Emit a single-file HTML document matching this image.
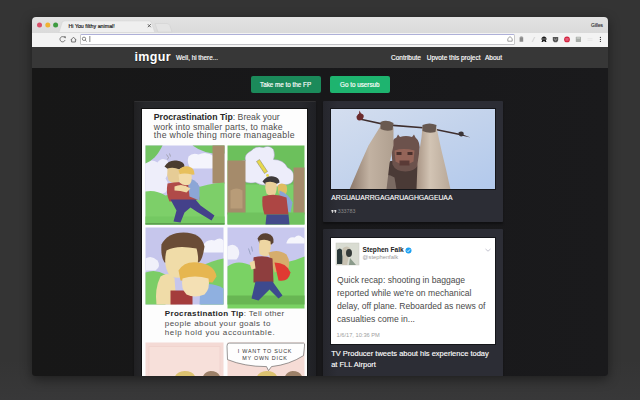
<!DOCTYPE html>
<html><head><meta charset="utf-8">
<style>
*{margin:0;padding:0;box-sizing:border-box}
html,body{width:640px;height:400px;overflow:hidden}
body{background:linear-gradient(#343434 0%,#343434 90%,#383839 100%);font-family:"Liberation Sans",sans-serif;position:relative}
.a{position:absolute;white-space:nowrap}
#win{left:32px;top:17px;width:576.4px;height:359px;background:linear-gradient(90deg,#171717,#18181a 50%,#1a1a1c);border-radius:4px 4px 3px 3px;overflow:hidden;box-shadow:0 3px 12px rgba(0,0,0,.45)}
#in{left:-32px;top:-17px;width:640px;height:400px}
.dot{width:6px;height:6px;border-radius:50%;top:22px}
.btn{height:17px;border-radius:2px}
.card{background:linear-gradient(90deg,#25262c,#2c2d35 8%,#2c2d35);border-radius:1px;box-shadow:0 2px 2px rgba(0,0,0,.35)}
.t{line-height:1}
</style></head><body>
<div id="win" class="a"><div id="in" class="a">
  <!-- tab strip -->
  <div class="a" style="left:32px;top:17px;width:576px;height:16px;background:linear-gradient(#e2e2e2,#dadada)"></div>
  <svg class="a" style="left:32px;top:17px" width="576" height="31" viewBox="32 17 576 31">
   <circle cx="39.5" cy="25" r="2.5" fill="#d9506a"/>
   <circle cx="47.8" cy="25" r="2.5" fill="#f0b232"/>
   <circle cx="55.6" cy="25" r="2.5" fill="#3d9b40"/>
   <path d="M155 23.5 h12 q2 0 2.8 2 l2.2 6.5 h-14 z" fill="#e4e4e4" stroke="#cacaca" stroke-width="0.4"/>
   <path d="M59 32.5 l3.2 -10 q0.5 -1.5 2 -1.5 h85 q1.6 0 2.1 1.5 l3.5 10z" fill="#efefef" stroke="#cfcfcf" stroke-width="0.4"/>
   <path d="M147.8 24.2 l3 3 M150.8 24.2 l-3 3" stroke="#444" stroke-width="0.8"/>
  </svg>
  <div id="tabt" class="a t" style="-webkit-text-stroke:0.15px #111;left:68.5px;top:23.8px;font-size:5.3px;color:#111">Hi You filthy animal!</div>
  <div id="gil" class="a t" style="-webkit-text-stroke:0.1px #222;left:591px;top:23.8px;font-size:4.8px;color:#222">Gilles</div>
  <!-- toolbar -->
  <div class="a" style="left:32px;top:32.5px;width:576px;height:14.5px;background:#f3f3f3"></div>
  <div class="a" style="left:32px;top:46.6px;width:577px;height:0.9px;background:#1e1e1e"></div>
  <div class="a" style="left:79.5px;top:34px;width:435px;height:10.5px;background:#fff;border:1px solid #aeb0d8;border-left-color:#c4c4c4;border-bottom-color:#c2c2c6;border-right-color:#c8c8c8;border-radius:1.5px"></div>
  <svg class="a" style="left:32px;top:32px" width="576" height="16" viewBox="32 32 576 16">
   <!-- reload -->
   <path d="M64.6 37.6 a2.6 2.6 0 1 0 0.4 2.6" stroke="#555" stroke-width="0.8" fill="none"/>
   <path d="M63.6 36.2 l2.2 0.2 l-0.2 2.2z" fill="#555"/>
   <!-- home -->
   <path d="M70.6 40.2 L73.5 37.2 L76.4 40.2 M71.6 39.4 V42 H75.4 V39.4" stroke="#555" stroke-width="0.8" fill="none"/>
   <!-- omnibox search & cursor -->
   <circle cx="84" cy="38.8" r="1.7" stroke="#555" stroke-width="0.7" fill="none"/>
   <path d="M85.2 40 l1.4 1.4" stroke="#555" stroke-width="0.8"/>
   <rect x="89.6" y="36" width="0.6" height="6" fill="#333"/>
   <!-- star in omnibox -->
   <path d="M510 36.6 l2.2 2 v2.6 h-4.4 v-2.6z" stroke="#777" stroke-width="0.7" fill="none"/>
   <!-- ext icons -->
   <path d="M519.6 37.2 h3.6 v4.6 h-3.6z" fill="#8a8a8a"/>
   <path d="M520.3 36.5 h2.2 v1 h-2.2z" fill="#8a8a8a"/>
   <path d="M531.5 42 l2.5 -5 h1.4 l-2.5 5z" fill="#dadada"/>
   <path d="M542 37.5 q2 -1.8 4 0 l0.8 1.2 h-5.6z M541.2 39.2 h5.6 l-1 1.4 l0.8 1.4 h-1.4 l-1.2 -0.9 l-1.2 0.9 h-1.4 l0.8 -1.4z" fill="#1a1a1a"/>
   <path d="M552.8 37 h5.4 v2.4 q0 2.8 -2.7 2.8 q-2.7 0 -2.7 -2.8z" fill="#555"/>
   <path d="M554.2 38.8 l1.3 1.2 l1.3 -1.2" stroke="#eee" stroke-width="0.6" fill="none"/>
   <circle cx="567" cy="39.4" r="2.9" fill="#d42640"/>
   <path d="M565.4 38.8 h3.2 M565.4 40 h3.2" stroke="#fbd" stroke-width="0.5"/>
   <rect x="575.8" y="36.8" width="5.2" height="5.2" rx="0.6" fill="#a8aca8"/>
   <rect x="576.6" y="37.5" width="3.6" height="1" fill="#d8dcd8"/>
   <path d="M587.5 38.6 h5 M587.5 40.4 h5" stroke="#e0e0e0" stroke-width="0.6"/>
   <circle cx="600.4" cy="37.4" r="0.6" fill="#333"/>
   <circle cx="600.4" cy="39.4" r="0.6" fill="#333"/>
   <circle cx="600.4" cy="41.4" r="0.6" fill="#333"/>
  </svg>
  <!-- header -->
  <div class="a" style="left:32px;top:47px;width:577px;height:21px;background:#373737"></div>
  <div id="logo" class="a t" style="left:134.5px;top:50.7px;font-size:12.5px;font-weight:bold;color:#fff;letter-spacing:0.35px;text-shadow:0 1px 1px rgba(0,0,0,.4)">imgur</div>
  <div id="well" class="a t" style="-webkit-text-stroke:0.15px #fff;left:176px;top:54.7px;font-size:6.3px;color:#fff">Well, hi there...</div>
  <div id="contr" class="a t" style="-webkit-text-stroke:0.15px #fff;left:391px;top:55.20px;font-size:6.5px;color:#fff">Contribute</div>
  <div id="upv" class="a t" style="-webkit-text-stroke:0.15px #fff;left:426.7px;top:55.20px;font-size:6.5px;color:#fff">Upvote this project</div>
  <div id="abt" class="a t" style="-webkit-text-stroke:0.15px #fff;left:485px;top:55.20px;font-size:6.5px;color:#fff">About</div>
  <!-- buttons -->
  <div class="a btn" style="left:251px;top:76px;width:70px;background:#1b8a5a"></div>
  <div class="a btn" style="left:330px;top:76px;width:60px;background:#1eb46f"></div>
  <div id="b1" class="a t" style="-webkit-text-stroke:0.15px #fff;left:260px;top:82.30px;font-size:6.3px;color:#fff">Take me to the FP</div>
  <div id="b2" class="a t" style="-webkit-text-stroke:0.15px #fff;left:340px;top:82.30px;font-size:6.3px;color:#fff">Go to usersub</div>
  <!-- cards -->
  <div class="a card" style="left:133.5px;top:101px;width:182.5px;height:290px;background:linear-gradient(90deg,#202022,#27282b 6%,#26272c 92%,#1f2024);border-top:1px solid #303032"></div>
  <div class="a" style="left:140.5px;top:107.5px;width:167px;height:280px;background:#111"></div>
  <svg class="a" style="left:141.5px;top:108.5px" width="165.5" height="270" viewBox="141.5 108.5 165.5 270">
  <rect x="141" y="108" width="167" height="270" fill="#fdfdfd"/>
  <!-- panel 1 -->
  <g>
   <rect x="145" y="145" width="79" height="79" fill="#c9c9ee"/>
   <path d="M145 162 q6 -4 12 0 q4 -6 10 -2 q4 10 -2 18 q6 8 0 14 q-8 4 -20 0z" fill="#eeeefa"/>
   <path d="M188 156 q4 -4 10 -2 q8 -4 16 2 q2 8 -2 12 h-22 q-4 -6 -2 -12z" fill="#f4f4fc"/>
   <path d="M145 145 h17 q-4 8 -8 12 q-4 4 -9 6z" fill="#72c462"/>
   <path d="M192 145 h32 v8 q-18 2 -32 -8z" fill="#72c462"/>
   <rect x="212" y="145" width="12" height="38" fill="#a68c6a"/>
   <path d="M145 191 q10 -2 20 4 q14 -2 26 -6 q16 -6 33 -7 v42 h-79z" fill="#7dcf69"/>
   <rect x="145" y="216" width="79" height="8" fill="#74c862"/><rect x="145" y="222.6" width="79" height="1.4" fill="#5a9c4c"/>
   <path d="M166 154 l2 3 l-1 2 M169 153 l1 3" stroke="#888" stroke-width="0.6" fill="none"/>
   <path d="M164 166 q4 -7 12 -6 q8 1 8 6 l-6 3 l-10 0z" fill="#4b3c30"/>
   <path d="M167 168 q6 -2 12 1 q2 8 -1 13 q-6 2 -10 -2 q-2 -6 -1 -12z" fill="#e6cc96"/>
   <path d="M167 183 q12 -3 30 0 l2 16 l-30 2 q-4 -8 -2 -18z" fill="#b04a48"/>
   <path d="M187 178 q8 0 12 8 l0 14 l-10 -4z" fill="#8ca6d6"/>
   <path d="M178 170 q4 -5 10 -4 q6 1 6 8 l-14 1z" fill="#e7c05c"/>
   <path d="M178 174 q6 -2 13 0 q1 7 -2 10 q-6 2 -10 -2z" fill="#f2dcaa"/>
   <path d="M174 186 q8 -4 16 2 l-4 4 q-6 -2 -12 -2z" fill="#f0d8a4"/>
   <path d="M170 199 h25 l5 6 l14 10 l-3 5 l-15 -9 l-6 -4 l-6 5 l-4 10 l-7 -1 l3 -11z" fill="#44418a"/>
  </g>
  <!-- panel 2 -->
  <g>
   <rect x="227" y="145" width="77" height="79" fill="#6cc05c"/>
   <rect x="245" y="184" width="48" height="30" fill="#7bd06a"/>
   <path d="M251 150 q4 -5 12 -3 q6 -3 10 2 q2 6 0 10 q10 0 14 8 q8 4 6 12 q-2 6 -10 5 q-6 4 -14 0 q-8 2 -14 -2 q-10 2 -14 -4 q-8 -2 -6 -10 q2 -8 10 -8 q-2 -6 6 -10z" fill="#ededfa" stroke="#9a9ab8" stroke-width="0.5"/>
   <rect x="227" y="160" width="18" height="54" fill="#a58b6b"/>
   <path d="M230 190 q6 -4 12 0 v18 h-12z" fill="#b89c78"/>
   <rect x="293" y="167" width="11" height="47" fill="#a58b6b"/>
   <rect x="227" y="212" width="77" height="12" fill="#70c25e"/>
   <path d="M256 161 l3 -2 l8 12 l-3 2z" fill="#e6d84c" stroke="#666" stroke-width="0.4"/>
   <circle cx="267" cy="175" r="1.4" fill="#e6d84c"/>
   <path d="M262 181 q4 -6 11 -5 q6 1 6 6 l-4 2 h-10z" fill="#3e3a3a"/>
   <path d="M265 182 q6 -2 11 1 q1 7 -2 12 q-5 1 -8 -2 q-2 -5 -1 -11z" fill="#ead098"/>
   <path d="M277 185 q4 -4 9 0 q2 6 -2 10 l-6 -2z" fill="#e0bd60"/>
   <path d="M279 190 q9 3 13 12 l-2 10 l-11 -4z" fill="#8aa4d4"/>
   <path d="M262 196 q12 -4 24 1 l2 17 h-24 q-3 -8 -2 -18z" fill="#ad4644"/>
   <path d="M266 214 h22 l1 10 h-24z" fill="#424a8a"/>
  </g>
  <!-- panel 3 -->
  <g>
   <rect x="145" y="227" width="78" height="77" fill="#c6c6ec"/>
   <path d="M202 246 q4 -8 12 -6 q6 -4 9 0 v12 h-22z" fill="#f4f4fc"/>
   <path d="M145 258 q6 -4 12 2 q4 6 -2 10 h-10z" fill="#f0f0fa"/>
   <path d="M145 272 q10 -4 20 2 v30 h-20z" fill="#7ccd66"/>
   <path d="M200 266 q12 -6 23 -8 v46 h-23z" fill="#7ccd66"/>
   <path d="M161 244 q6 -12 22 -12 q18 0 21 14 q-2 14 -6 16 l-34 0 q-4 -6 -3 -18z" fill="#6a4c36"/>
   <path d="M166 250 q10 -6 30 -2 q4 14 -2 24 q-12 8 -24 4 q-8 -10 -4 -26z" fill="#f0dca8"/>
   <path d="M160 276 q8 -6 14 2 l2 26 h-20 q-2 -16 4 -28z" fill="#f0dca8"/>
   <path d="M170 290 h22 v14 h-22z" fill="#a43c3c"/>
   <path d="M200 284 q14 -2 23 4 v16 h-24z" fill="#8fb0e0"/>
   <path d="M178 270 q6 -10 20 -8 q16 2 18 14 l-4 6 l-32 -2z" fill="#e6b650"/>
   <path d="M182 278 q12 -4 26 0 q2 10 -4 16 q-10 4 -18 0 q-6 -6 -4 -16z" fill="#f4e0b4"/>
  </g>
  <!-- panel 4 -->
  <g>
   <rect x="227" y="227" width="77" height="77" fill="#c8c8ee"/>
   <path d="M286 242 q2 -6 8 -5 q4 -4 8 0 q3 0 2 6 h-18z" fill="#f6f6fc"/>
   <path d="M227 246 q6 -4 10 1 q4 6 -1 12 h-9z" fill="#f2f2fa"/>
   <path d="M227 266 q8 -6 18 -3 q10 4 16 0 q14 -4 24 -1 q10 -2 19 -6 v52 h-77z" fill="#7ad264"/>
   <rect x="227" y="295" width="77" height="9" fill="#68b653"/>
   <path d="M248 248 l2 6 M251 246 l1 5" stroke="#7a88a8" stroke-width="0.6" fill="none"/>
   <path d="M257 238 q3 -6 10 -5 q7 2 6 9 l-2 2 l-12 -1z" fill="#5a4232"/>
   <path d="M259 240 q6 -2 11 1 q1 9 -2 14 q-6 2 -9 -2 q-1 -6 0 -13z" fill="#eed6a2"/>
   <path d="M268 252 q10 -4 18 2 q4 6 2 14 l-14 4z" fill="#d6ad6c"/>
   <path d="M274 262 q12 0 16 10 q-2 10 -12 8z" fill="#e03a32"/>
   <path d="M253 257 q10 -3 19 1 l1 24 h-20z" fill="#8e3e3e"/>
   <path d="M249 262 l5 -2 l1 8 l-4 1z" fill="#eed6a2"/>
   <path d="M255 281 h17 l10 14 l-4 3 l-9 -9 l-11 11 l-7 -2 z" fill="#3d4a8e"/>
  </g>
  <!-- panel 5 -->
  <rect x="145" y="342" width="78" height="40" fill="#f4dad5"/>
  <rect x="148.5" y="346" width="71" height="40" fill="#f7e0da" stroke="#efd2cc" stroke-width="0.8"/>
  <path d="M174 377 q2 -6 10 -6.5 q9 0 11 6.5z" fill="#dcc270"/>
  <path d="M202 377 q2 -6 8 -6.5 q8 0 10 6.5z" fill="#9c8068"/>
  <!-- panel 6 -->
  <rect x="227" y="342" width="77" height="40" fill="#f6dcd6"/>
  <path d="M229 342.6 h74 q1.5 0 1 3 l-1 9.5 q-14 9 -32 11 l-3 4 l-2 -4 q-22 0 -39 -7 l-0.5 -13.5 q0 -3 2 -3z" fill="#fefefe" stroke="#555" stroke-width="0.6"/>
  <path d="M256 377 q2 -6 10 -6.5 q9 0 11 6.5z" fill="#dcc270"/>
  <path d="M284 377 q2 -6 8 -6.5 q8 0 10 6.5z" fill="#9c8068"/>
  <text x="264.5" y="352.3" font-family="Liberation Sans" font-size="5.4" fill="#333" text-anchor="middle" letter-spacing="0.75">I WANT TO SUCK</text>
  <text x="264.5" y="359.5" font-family="Liberation Sans" font-size="5.4" fill="#333" text-anchor="middle" letter-spacing="0.75">MY OWN DICK</text>
  </svg>
  <div class="a card" style="left:323.3px;top:101.2px;width:180px;height:121px"></div>
  <div class="a" style="left:329.5px;top:107.5px;width:166.5px;height:82px;background:#15161a"></div>
  <svg class="a" style="left:330.5px;top:108.5px" width="164.8" height="80" viewBox="330.5 108.5 164.8 80">
   <defs>
    <linearGradient id="sky" x1="0" y1="0" x2="1" y2="1">
     <stop offset="0" stop-color="#d4deef"/><stop offset="0.5" stop-color="#c3d3ec"/><stop offset="1" stop-color="#b2c9ec"/>
    </linearGradient>
    <linearGradient id="slv" x1="0" y1="0" x2="1" y2="0">
     <stop offset="0" stop-color="#8a7668"/><stop offset="0.45" stop-color="#c2b2a2"/><stop offset="1" stop-color="#b0a090"/>
    </linearGradient>
    <linearGradient id="srv" x1="0" y1="0" x2="1" y2="0">
     <stop offset="0" stop-color="#a89484"/><stop offset="0.4" stop-color="#d2c4b4"/><stop offset="1" stop-color="#b8a898"/>
    </linearGradient>
   </defs>
   <rect x="330" y="108" width="166" height="81" fill="url(#sky)"/>
   <path d="M382 163 q14 -6 38 -1 l1 27 h-40z" fill="#4a3a36"/>
   <path d="M382 175 q6 -2 12 2 l2 12 h-15z" fill="#7a6a62"/>
   <path d="M391 151 q-1 -12 5 -14 l1.5 -3 l2 2.5 q6 -2 12 0 l2 -2.5 l1.5 3 q5 4 4 14 l-1 13 q-4 7 -13 7 q-10 0 -13 -7z" fill="#6c524c"/>
   <path d="M394 150 q9 -3 20 0 l-1 11 q-9 6 -18 0z" fill="#946458"/>
   <path d="M396 151.5 h5 v3 h-5z M407 151.5 h5 v3 h-5z" fill="#4a302c"/>
   <path d="M399 160 h10 v5 h-10z" fill="#5a3a36"/>
   <path d="M358 117.5 L386 123.6 L429 127 L461 133.6 L470 137 L460.6 135 L429 128.6 L386 125.2 L358 119z" fill="#3e2e2e"/>
   <path d="M356 116 q2 -4 5 -3 q3 1 2 4 q-1 3 -4 3 q-3 0 -3 -4z M359 110 l1.5 3 h-2z" fill="#6a2a2c"/>
   <path d="M458 132 q3 -2 5 0 q1 3 -2 4 q-3 0 -3 -4z" fill="#3a3436"/>
   <path d="M381 124 l12 3 l0 18 l-4 18 l-3 26 h-37 l11 -26 l8 -18z" fill="url(#slv)"/>
   <path d="M422 126 l14 1 l5 23 q5 20 9 39 h-34 l1 -26 l4 -26z" fill="url(#srv)"/>
   <path d="M380 121.5 q6 -3 13 1 l-1 7 q-6 2 -12 -1z" fill="#6a5a50"/>
   <path d="M422 124.5 q7 -3 14 0 l-1 7 q-7 2 -13 -1z" fill="#665850"/>
  </svg>
  <div id="argu" class="a t" style="-webkit-text-stroke:0.12px #fff;left:331.2px;top:195.40px;font-size:6.8px;color:#fff">ARGUAUARRGAGARUAGHGAGEUAA</div>
  <svg class="a" style="left:331px;top:208.5px" width="6" height="5" viewBox="0 0 6 5"><path d="M0.4 1 h2 v1.6 l-0.9 1.4 h-0.7 l0.6 -1.4 h-1z M3.3 1 h2 v1.6 l-0.9 1.4 h-0.7 l0.6 -1.4 h-1z" fill="#e6e6e6"/></svg>
  <div id="views" class="a t" style="left:337.7px;top:209.40px;font-size:5.3px;color:#888">333783</div>
  <div class="a card" style="left:323.3px;top:229.3px;width:180px;height:160px"></div>
  <div class="a" style="left:329.5px;top:236.8px;width:166.5px;height:108.5px;background:#15161a"></div>
  <div class="a" style="left:330.5px;top:237.8px;width:164.8px;height:106.7px;background:#fff"></div>
  <svg class="a" style="left:335px;top:242px" width="26" height="24" viewBox="335 242 26 24">
   <rect x="336" y="243" width="23" height="22" fill="#d9dcd2"/>
   <rect x="336" y="243" width="23" height="22" fill="none" stroke="#c8c8c0" stroke-width="0.5"/>
   <path d="M337 250 q3 -3 5 0 l1 14 h-6z" fill="#2c3a3a"/>
   <path d="M343 248 q4 -3 7 0 q2 5 -1 8 l-2 9 h-5 l1 -9 q-2 -4 0 -8z" fill="#c8c2b2"/>
   <ellipse cx="349" cy="253" rx="3" ry="4" fill="#343a38"/>
   <path d="M350 258 l6 7 h-7z" fill="#8a9a8a"/>
  </svg>
  <svg class="a" style="left:404.5px;top:246.8px" width="7" height="7" viewBox="0 0 7 7">
   <circle cx="3.5" cy="3.5" r="3" fill="#1da1f2"/>
   <path d="M2 3.6 l1 1 l2 -2.2" stroke="#fff" stroke-width="0.9" fill="none"/>
  </svg>
  <svg class="a" style="left:484px;top:247px" width="8" height="6" viewBox="0 0 8 6">
   <path d="M1.5 2 l2.5 2.2 l2.5 -2.2" stroke="#aab" stroke-width="0.7" fill="none"/>
  </svg>
  <div id="tv1" class="a t" style="-webkit-text-stroke:0.12px #fff;left:331.2px;top:350.1px;font-size:7.5px;color:#fff">TV Producer tweets about his experience today</div>
  <div id="tv2" class="a t" style="-webkit-text-stroke:0.12px #fff;left:331.2px;top:360.8px;font-size:7.5px;color:#fff">at FLL Airport</div>
  <!-- tweet -->
  <div id="sf" class="a t" style="left:362.6px;top:247.30px;font-size:6.6px;font-weight:bold;color:#222">Stephen Falk</div>
  <div id="sfh" class="a t" style="left:362.6px;top:255.00px;font-size:5.8px;color:#999">@stephenfalk</div>
  <div id="q1" class="a t" style="left:336.5px;top:276.0px;font-size:9.3px;color:#4a4a4a;transform:scaleX(0.925);transform-origin:0 0">Quick recap: shooting in baggage</div>
  <div id="q2" class="a t" style="left:336.5px;top:289.0px;font-size:9.3px;color:#4a4a4a;transform:scaleX(0.925);transform-origin:0 0">reported while we're on mechanical</div>
  <div id="q3" class="a t" style="left:336.5px;top:302.0px;font-size:9.3px;color:#4a4a4a;transform:scaleX(0.925);transform-origin:0 0">delay, off plane. Reboarded as news of</div>
  <div id="q4" class="a t" style="left:336.5px;top:315.0px;font-size:9.3px;color:#4a4a4a;transform:scaleX(0.925);transform-origin:0 0">casualties come in...</div>
  <div id="qd" class="a t" style="left:336.5px;top:333.4px;font-size:5.7px;color:#a0a0a0">1/6/17, 10:36 PM</div>
  <!-- comic text -->
  <div id="c1" class="a t" style="left:153.75px;top:112.90px;font-size:8.7px;color:#4d4d4d"><b style="color:#262626">Procrastination Tip</b>: Break your</div>
  <div id="c2" class="a t" style="letter-spacing:0.2px;left:153.75px;top:122.90px;font-size:8.7px;color:#4d4d4d">work into smaller parts, to make</div>
  <div id="c3" class="a t" style="letter-spacing:0.33px;left:153.75px;top:131.20px;font-size:8.7px;color:#4d4d4d">the whole thing more manageable</div>
  <div id="c4" class="a t" style="letter-spacing:0.33px;left:164.8px;top:310px;font-size:8px;color:#4d4d4d"><b style="color:#262626">Procrastination Tip</b>: Tell other</div>
  <div id="c5" class="a t" style="letter-spacing:0.45px;left:164.8px;top:319.5px;font-size:8px;color:#4d4d4d">people about your goals to</div>
  <div id="c6" class="a t" style="letter-spacing:0.59px;left:164.8px;top:329px;font-size:8px;color:#4d4d4d">help hold you accountable.</div>
</div></div>
</body></html>
